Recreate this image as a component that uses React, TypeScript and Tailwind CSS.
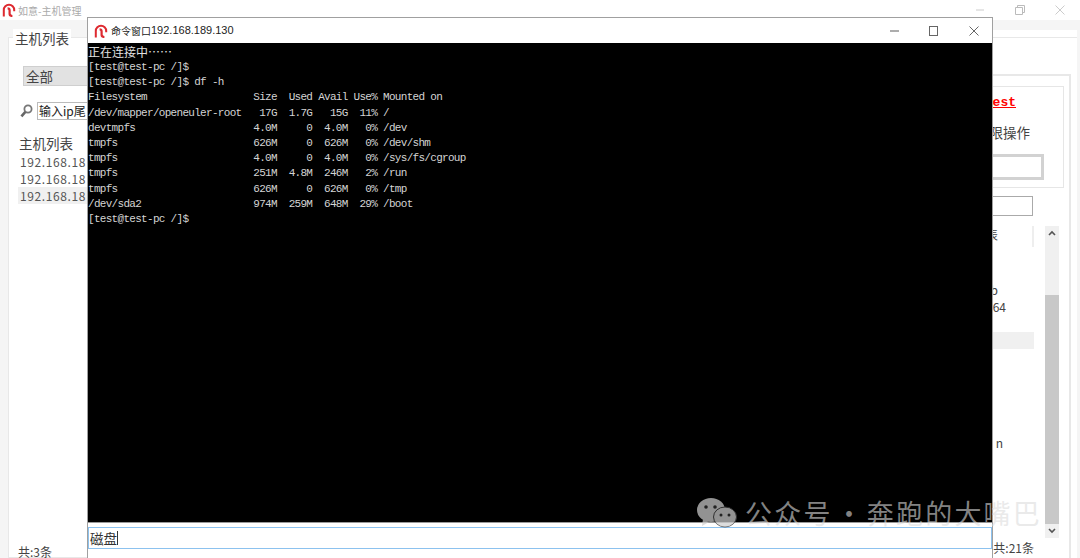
import React from 'react';

const termLines = [
  '[test@test-pc /]$',
  '[test@test-pc /]$ df -h',
  'Filesystem                  Size  Used Avail Use% Mounted on',
  '/dev/mapper/openeuler-root   17G  1.7G   15G  11% /',
  'devtmpfs                    4.0M     0  4.0M   0% /dev',
  'tmpfs                       626M     0  626M   0% /dev/shm',
  'tmpfs                       4.0M     0  4.0M   0% /sys/fs/cgroup',
  'tmpfs                       251M  4.8M  246M   2% /run',
  'tmpfs                       626M     0  626M   0% /tmp',
  '/dev/sda2                   974M  259M  648M  29% /boot',
  '[test@test-pc /]$',
];

const Logo: React.FC<{ size: number }> = ({ size }) => (
  <svg width={size} height={size} viewBox="0 0 14 14" fill="none" className="shrink-0">
    <path d="M1.8 13.5V7a5.2 5.2 0 0 1 10.4 0v1.2" stroke="#de2a30" strokeWidth="2" />
    <path d="M5.6 5.4c1.3 0 2 .8 2 2.1v3.3c0 1.6.9 2.2 2.8 2.2" stroke="#de2a30" strokeWidth="2.2" />
  </svg>
);

const HostRow: React.FC<{ active?: boolean }> = ({ active }) => (
  <div className={`h-[17px] pl-[2px] text-[12px] leading-[17px] tracking-[0.6px] whitespace-nowrap ${active ? 'bg-[#f0f0f0]' : ''}`}>
    192.168.18
  </div>
);

const LeftPanel = () => (
  <div className="w-[480px] shrink-0 pl-[8px] pt-[17px] flex flex-col">
    <div className="relative flex-1 min-h-0 bg-white border border-[#e8e8e8] pl-[14px] pt-[28px] flex flex-col">
      <span className="absolute left-[4px] top-[-9px] bg-white px-[2px] text-[13.5px] leading-[18px] text-[#444]">主机列表</span>
      <div className="w-[140px] h-[20px] bg-[#e2e2e2] border border-[#cfcfcf] text-[13.5px] leading-[18px] pl-[2px] text-[#444]">全部</div>
      <div className="mt-[16px] flex items-center gap-[4px] -ml-[3px]">
        <svg width="13" height="14" viewBox="0 0 13 14" fill="none" className="shrink-0">
          <circle cx="8" cy="5" r="3.6" stroke="#777" strokeWidth="1.8" />
          <path d="M5.4 7.8 1.4 12.4" stroke="#666" strokeWidth="2.6" />
        </svg>
        <div className="w-[200px] h-[18px] bg-white border border-[#bbb] text-[12px] leading-[16px] pl-[1px] text-[#222]">输入ip尾</div>
      </div>
      <div className="mt-[14px] -ml-[4px] text-[13.5px] leading-[18px] text-[#444]">主机列表</div>
      <div className="mt-[1px] -ml-[5px] text-[#555]">
        <HostRow />
        <HostRow />
        <HostRow active />
      </div>
      <div className="mt-[341px] -ml-[5px] text-[12px] leading-[14px] text-[#444]">共:3条</div>
    </div>
  </div>
);

const listRows = ['', '', 'b', '64', '', '', '', '', '', '', '', 'n'];
const rowPad = ['', '', 'pr-[36px]', 'pr-[28px]', '', '', '', '', '', '', '', 'pr-[31px]'];

const RightPanel = () => (
  <div className="flex-1 min-w-0 pt-[10px] pl-[8px] pr-[3px] flex flex-col">
    <div className="flex-1 min-h-0 bg-white pt-[7px] flex flex-col">
      <div className="flex-1 min-h-0 border-t border-[#e8e8e8] pt-[36px] pr-[6px] pl-[4px] flex flex-col">
        <div className="flex-1 min-h-0 border-2 border-b-0 border-[#e8e8e8] pt-[10px] pr-[5px] pl-[6px] flex flex-col text-[#444]">
          <div className="h-[102px] shrink-0 border border-[#e6e6e6] pt-[9px] pr-[19px] flex flex-col items-end">
            <div className="mr-[28px] text-[13px] leading-[14px] font-bold text-[#f00] underline font-['Liberation_Mono',monospace]">est</div>
            <div className="mt-[13px] mr-[14px] text-[13.5px] leading-[18px]">限操作</div>
            <div className="mt-[13px] w-[300px] h-[26px] shrink-0 bg-white border-[3px] border-[#d2d2d2]" />
          </div>
          <div className="mt-[8px] self-end mr-[31px] w-[300px] h-[20px] shrink-0 bg-white border border-[#aaa]" />
          <div className="mt-[10px] h-[312px] shrink-0 flex gap-[11px] pr-[5px]">
            <div className="flex-1 min-w-0 text-[12px] text-[#444]">
              <div className="h-[21px] border-r-2 border-[#eee] pr-[34px] text-right leading-[18px]">表</div>
              {listRows.map((t, i) => (
                <div key={i} className={`h-[17px] leading-[17px] text-right ${rowPad[i]} ${i === 5 ? 'bg-[#f0f0f0]' : ''}`}>{t}</div>
              ))}
            </div>
            <div className="w-[14px] shrink-0 bg-[#f0f0f0] flex flex-col items-center">
              <svg width="8" height="14" viewBox="0 0 8 14" fill="none" className="shrink-0"><path d="M1 9l3-3 3 3" stroke="#555" strokeWidth="1.6" /></svg>
              <div className="mt-[55px] h-[229px] w-full bg-[#c8c8c8]" />
              <svg width="8" height="14" viewBox="0 0 8 14" fill="none" className="shrink-0"><path d="M1 5l3 3 3-3" stroke="#555" strokeWidth="1.6" /></svg>
            </div>
          </div>
          <div className="mt-[3px] self-end mr-[30px] text-[12px] leading-[14px] text-[#444]">共:21条</div>
        </div>
      </div>
    </div>
  </div>
);

const Terminal = () => (
  <div className="absolute left-[87px] top-[17px] w-[906px] h-[541px] bg-white border-t border-x border-[#a0a0a0] flex flex-col">
    <div className="h-[25px] shrink-0 flex items-center pl-[6px]">
      <Logo size={14} />
      <span className="ml-[3px] text-[10px] text-[#222]">命令窗口</span>
      <span className="text-[11px] text-[#222] font-['Liberation_Sans',sans-serif]">192.168.189.130</span>
      <div className="ml-auto flex items-center">
        <svg width="40" height="14" viewBox="0 0 40 14" fill="none"><path d="M18 7h9" stroke="#777" strokeWidth="1.2" /></svg>
        <svg width="40" height="14" viewBox="0 0 40 14" fill="none"><rect x="17.5" y="2.5" width="8" height="9" stroke="#666" /></svg>
        <svg width="40" height="14" viewBox="0 0 40 14" fill="none"><path d="M17.5 2.5l9 9m0-9-9 9" stroke="#666" /></svg>
      </div>
    </div>
    <div className="h-[479px] shrink-0 bg-black text-[#d4d4d4] pt-px overflow-hidden">
      <div className="text-[12px] leading-[16px] text-[#e0e0e0]">正在连接中……</div>
      {termLines.map((line, i) => (
        <div key={i} className="text-[11px] leading-[15.2px] whitespace-pre tracking-[-0.7px] font-['Liberation_Mono',monospace]">{line}</div>
      ))}
    </div>
    <div className="h-px shrink-0 bg-[#9a9a9a]" />
    <div className="h-[4px] shrink-0 bg-white" />
    <div className="h-[22px] shrink-0 border border-[#8cc2ef] pl-[1px] text-[13.5px] text-[#333] flex items-center">
      磁盘<span className="w-px h-[14px] bg-[#333]" />
    </div>
  </div>
);

const Watermark = () => (
  <div className="absolute left-[697px] top-[497px] flex items-center text-[27px] leading-[30px] text-[#dcdcdc]/60 whitespace-nowrap tracking-[2.2px]">
    <svg width="40" height="32" viewBox="0 0 40 32" className="mr-[8px] opacity-70">
      <ellipse cx="14" cy="13" rx="14" ry="12" fill="#d0d0d0" />
      <path d="M6 22 5 29l7-4z" fill="#d0d0d0" />
      <ellipse cx="28" cy="20" rx="11.5" ry="10" fill="#d0d0d0" stroke="#444" strokeWidth="1" />
      <circle cx="9" cy="10" r="1.8" fill="#333" />
      <circle cx="18" cy="10" r="1.8" fill="#333" />
      <circle cx="24" cy="18" r="1.5" fill="#333" />
      <circle cx="32" cy="18" r="1.5" fill="#333" />
    </svg>
    <span>公众号</span>
    <span className="ml-[3px] mr-[2px]">·</span>
    <span>奔跑的大嘴巴</span>
  </div>
);

export default function App() {
  return (
    <div className="relative w-[1080px] h-[558px] overflow-hidden bg-[#f5f5f5] font-['Noto_Sans_CJK_SC','Liberation_Sans',sans-serif]">
      <div className="h-[20px] flex bg-white items-center pl-[2px]">
        <Logo size={14} />
        <span className="ml-[2px] text-[10px] text-[#aaa]">如意-主机管理</span>
        <div className="ml-auto flex items-center gap-[30px] pr-[15px]">
          <svg width="10" height="10" viewBox="0 0 10 10" fill="none"><path d="M1 5h8" stroke="#ccc" /></svg>
          <svg width="10" height="10" viewBox="0 0 10 10" fill="none"><path d="M.5 2.5h7v7h-7zM2.5 2.5v-2h7v7h-2" stroke="#bbb" /></svg>
          <svg width="10" height="10" viewBox="0 0 10 10" fill="none"><path d="M.5.5l9 9m0-9-9 9" stroke="#ccc" /></svg>
        </div>
      </div>
      <div className="h-[538px] flex">
        <LeftPanel />
        <RightPanel />
      </div>
      <Terminal />
      <Watermark />
    </div>
  );
}
